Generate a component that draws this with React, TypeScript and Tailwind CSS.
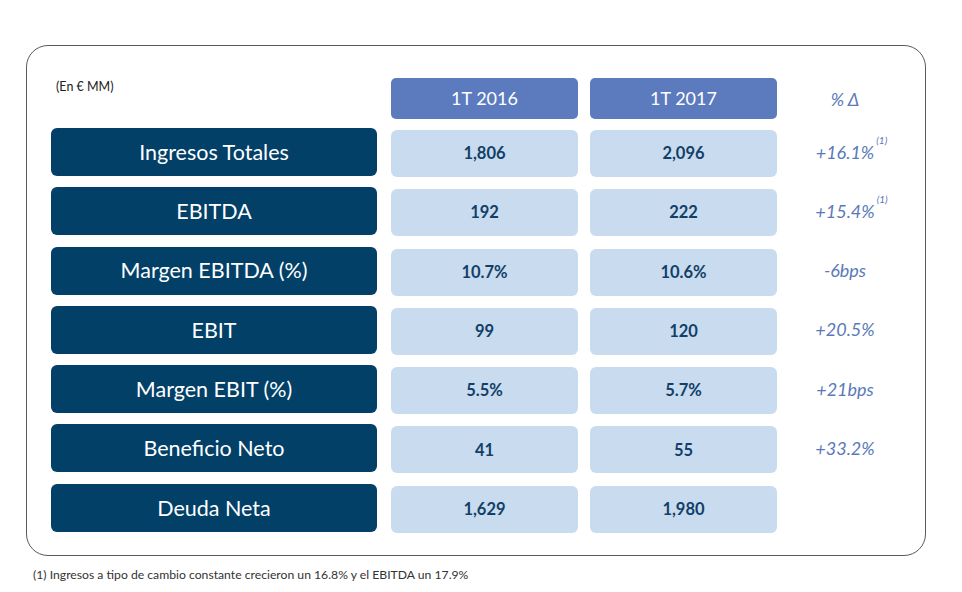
import React from "react";

const rows = [
  { label: "Ingresos Totales", a: "1,806", b: "2,096", d: "+16.1%", sup: true },
  { label: "EBITDA", a: "192", b: "222", d: "+15.4%", sup: true },
  { label: "Margen EBITDA (%)", a: "10.7%", b: "10.6%", d: "-6bps" },
  { label: "EBIT", a: "99", b: "120", d: "+20.5%" },
  { label: "Margen EBIT (%)", a: "5.5%", b: "5.7%", d: "+21bps" },
  { label: "Beneficio Neto", a: "41", b: "55", d: "+33.2%" },
  { label: "Deuda Neta", a: "1,629", b: "1,980", d: "" },
];

export default function App() {
  return (
    <div
      className="w-[962px] h-[592px] bg-white overflow-hidden"
      style={{ fontFamily: "Lato, 'Open Sans', sans-serif" }}
    >
      <div className="pt-[45px] pl-[26px]">
        <div className="w-[900px] h-[511px] border-[1.5px] border-[#5a5a5a] rounded-[22px] pl-[24px] pt-[32px]">
          <div className="flex h-[42px]">
            <div className="w-[326px] text-[12.5px] text-[#222] pl-[5px] pt-[3px] leading-none">(En € MM)</div>
            <div className="ml-[14px] w-[187px] h-[41px] bg-[#5b7bbe] rounded-[5px] flex items-center justify-center text-white text-[18px]">
              1T 2016
            </div>
            <div className="ml-[12px] w-[187px] h-[41px] bg-[#5b7bbe] rounded-[5px] flex items-center justify-center text-white text-[18px]">
              1T 2017
            </div>
            <div className="ml-[13px] w-[110px] flex items-center justify-center italic text-[18px] text-[#5a79b9] pt-[1px]">
              % Δ
            </div>
          </div>
          <div className="mt-[8px] flex flex-col gap-[11.3px]">
            {rows.map((r) => (
              <div key={r.label} className="flex h-[48px]">
                <div className="w-[326px] h-[48px] bg-[#024068] rounded-[6px] flex items-center justify-center text-white text-[21.5px]">
                  {r.label}
                </div>
                <div className="ml-[14px] mt-[2px] w-[187px] h-[47px] bg-[#c9dbee] rounded-[6px] flex items-center justify-center text-[#123f68] font-bold text-[16.5px]">
                  {r.a}
                </div>
                <div className="ml-[12px] mt-[2px] w-[187px] h-[47px] bg-[#c9dbee] rounded-[6px] flex items-center justify-center text-[#123f68] font-bold text-[16.5px]">
                  {r.b}
                </div>
                <div className="ml-[13px] w-[110px] flex items-center justify-center italic text-[18px] text-[#5a79b9]">
                  <span className="relative">
                    {r.d}
                    {r.sup && (
                      <span className="absolute left-full -top-[6px] ml-[2px] text-[10px]">(1)</span>
                    )}
                  </span>
                </div>
              </div>
            ))}
          </div>
        </div>
      </div>
      <div className="pl-[33px] pt-[10px] text-[12.2px] text-[#333]">
        (1) Ingresos a tipo de cambio constante crecieron un 16.8% y el EBITDA un 17.9%
      </div>
    </div>
  );
}
